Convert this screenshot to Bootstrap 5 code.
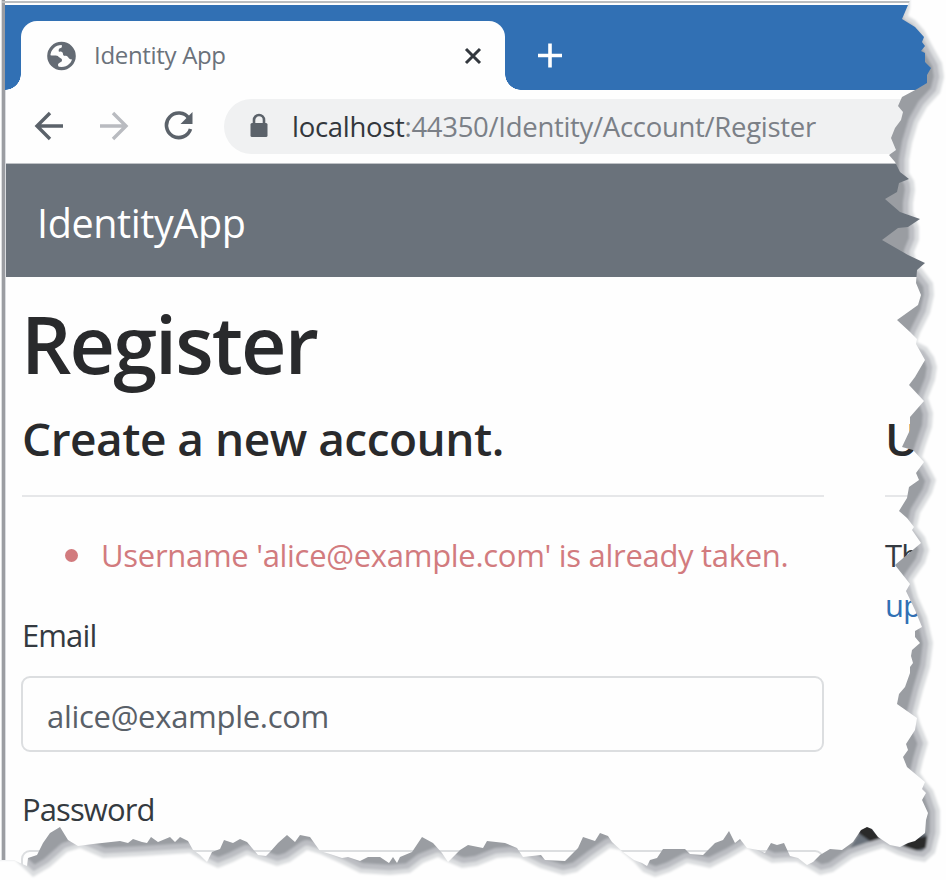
<!DOCTYPE html>
<html lang="en">
<head>
<meta charset="utf-8">
<title>Identity App</title>
<link href="https://cdn.jsdelivr.net/npm/bootstrap@5.3.0/dist/css/bootstrap.min.css" rel="stylesheet">
<style>
body{margin:0;background:#fefefe;font-family:"Open Sans","Noto Sans",sans-serif;color:#343a40}
.screen{width:946px;height:880px;background:#fefefe}
.window{height:860px;border-left:3px solid #9b9da2;margin-left:2px;padding-top:1px;background:#fefefe;box-shadow:-1px 0 #dcdee0}
.top-line{height:2px;background:#babdc0;margin-bottom:2px;margin-left:-3px}
.page-frame{border-left:1px solid #dadce0}
.tabs{height:85px;background:#3170b4;padding-top:16px}
.tab{width:484px;height:69px;margin-left:16px;background:#fefefe;border-radius:16px 16px 0 0;padding:0 23px 0 25px;position:relative;color:#6b727b}
.tab::before,.tab::after{content:"";position:absolute;bottom:0;width:16px;height:16px}
.tab::before{left:-16px;background:radial-gradient(circle at 0 0,#3170b4 15.5px,#fefefe 16px)}
.tab::after{right:-16px;background:radial-gradient(circle at 100% 0,#3170b4 15.5px,#fefefe 16px)}
.tab-title{font-size:24px;letter-spacing:-.32px;margin-left:17px;padding-bottom:2px}
.plus{margin-left:32px}
.toolbar{height:74px;padding-left:28px;border-bottom:1px solid #bfc2c6;padding-bottom:1px}
.forward{margin-left:35px}
.reload{margin-left:34px}
.address{height:55px;margin-left:30px;background:#f0f1f2;border-radius:28px 0 0 28px;padding-left:25px;color:#7b8087;font-size:27.5px;letter-spacing:-.3px}
.url{margin-left:23px;padding-top:2px}
.url b{font-weight:400;color:#33373c}
.site-head{height:113px;background:#6a727b;padding:7px 0 0 31px;color:#fff}
.site-name{font-size:39.5px;letter-spacing:-.4px}
.main{padding-left:16px}
.left{width:802px}
.title{font-size:79px;line-height:90px;font-weight:600;color:#292a2c;letter-spacing:-1.9px;margin:22px 0 19px -1px}
.sub{font-size:46px;line-height:60px;font-weight:600;color:#292a2c;letter-spacing:-.5px;white-space:nowrap;margin:0}
.rule{height:2px;background:#e6e7e9;margin:27px 0 35px}
.t{font-size:31px;line-height:46px;letter-spacing:-.9px;white-space:nowrap}
.err{color:#d27b7e;letter-spacing:-.3px;margin-bottom:34px}
.dot{width:13px;height:13px;border-radius:50%;background:#d27b7e;margin-left:43px;margin-right:23px}
.field{height:76px;border:2px solid #dcdee0;border-radius:9px;padding:4px 24px 0;margin:18px 0 34px -1px;background:#fefefe;letter-spacing:-.3px;color:#596068}
.side{margin-left:61px;padding-top:131px}
.provider{color:#3170b4;margin-top:4px}
</style>
<script src="https://cdn.jsdelivr.net/npm/bootstrap@5.3.0/dist/js/bootstrap.bundle.min.js"></script>
</head>
<body>
<div class="screen position-relative overflow-hidden">
 <div class="window">
  <div class="top-line"></div>
  <div class="tabs d-flex">
   <div class="tab d-flex align-items-center">
    <svg width="31" height="30" viewBox="0 0 31 30"><circle cx="15.500" cy="15" r="12.700" fill="#fefefe" stroke="#646b74" stroke-width="3.200"/><path d="M16 2c-1 2 1 4-1 5-2 0-3 2-2 4 2-1 4 0 4 2 0 3 4 1 5 3 1 2 3 3 5 2 2-8-3-15-11-16zM3 14c4 1 6 0 9 1 1 2 4 2 4 4 0 3-4 2-4 5l1 4C6 27 2 21 3 14z" fill="#646b74"/></svg>
    <span class="tab-title">Identity App</span>
    <svg class="ms-auto" width="18" height="18" viewBox="0 0 18 18"><path d="M2 2l14 14M16 2L2 16" stroke="#33383e" stroke-width="3"/></svg>
   </div>
   <svg class="plus" width="26" height="69" viewBox="0 0 26 69"><path d="M1 34.500h24M13 22.500v24" stroke="#fff" stroke-width="3.600"/></svg>
  </div>
  <div class="page-frame">
   <div class="toolbar d-flex align-items-center">
    <svg width="30" height="30" viewBox="0 0 30 30"><path d="M29 15H4M16 2L3 15l13 13" fill="none" stroke="#5b626a" stroke-width="3.400"/></svg>
    <svg class="forward" width="30" height="30" viewBox="0 0 30 30"><path d="M1 15h25M14 2l13 13-13 13" fill="none" stroke="#b9bbc0" stroke-width="3.400"/></svg>
    <svg class="reload" width="31" height="30" viewBox="0 0 31 30"><path d="M26 7.500A12.300 12.300 0 1 0 27.500 18" fill="none" stroke="#5b626a" stroke-width="3.600"/><path d="M29.500 1v12H17.500z" fill="#5b626a"/></svg>
    <div class="address flex-fill d-flex align-items-center">
     <svg width="20" height="26" viewBox="0 0 20 26"><path d="M5 11V7a5 5 0 0 1 10 0v4" fill="none" stroke="#5b626a" stroke-width="2.600"/><rect x="1.500" y="10" width="17" height="14" rx="1.500" fill="#5b626a"/></svg>
     <span class="url"><b>localhost</b>:44350/Identity/Account/Register</span>
    </div>
   </div>
   <div class="site-head d-flex align-items-center"><span class="site-name">IdentityApp</span></div>
   <div class="main d-flex">
    <div class="left flex-shrink-0">
     <h1 class="title">Register</h1>
     <h2 class="sub">Create a new account.</h2>
     <div class="rule"></div>
     <div class="t err d-flex align-items-center"><span class="dot"></span><span>Username 'alice@example.com' is already taken.</span></div>
     <div class="t">Email</div>
     <div class="t field d-flex align-items-center">alice@example.com</div>
     <div class="t">Password</div>
     <div class="field"></div>
    </div>
    <div class="side flex-fill">
     <div class="sub">Us</div>
     <div class="rule"></div>
     <div class="t">Th</div>
     <div class="t provider">up</div>
    </div>
   </div>
  </div>
 </div>
 <!-- torn paper edge with its stepped shadow -->
 <svg class="position-absolute top-0 start-0" width="946" height="880" viewBox="0 0 946 880">
  <defs>
   <filter id="soft" x="-5%" y="-5%" width="110%" height="110%"><feGaussianBlur stdDeviation="1.300"/></filter>
   <clipPath id="outside"><path d="M910 0L908 5 902 19 915 27 924 37 922 42 925 46 921 51 925 53 925 62 931 68 927 75 927 83 917 89 902 97 898 106 903 112 901 120 895 128 891 138 896 150 889 155 895 162 900 172 909 179 899 183 897 192 885 199 900 212 920 219 908 227 898 228 882 240 908 255 925 263 917 270 916 283 921 295 918 305 897 320 910 332 917 339 916 344 925 360 915 377 909 385 924 401 910 417 910 430 902 447 913 450 924 462 916 473 919 480 909 487 907 498 899 511 907 518 914 527 912 530 921 543 895 565 910 584 906 591 915 610 922 627 915 631 915 637 920 643 912 650 911 656 913 663 910 667 910 673 905 687 899 694 897 704 917 718 915 730 906 744 908 750 903 757 907 767 925 782 922 789 926 793 922 800 928 813 926 820 925 833 915 841 908 843 900 847 890 845 878 837 872 829 867 827 861 830 853 842 842 850 830 849 820 855 813 862 807 865 798 858 790 856 784 843 777 845 771 843 765 853 758 850 747 848 740 839 735 843 729 831 723 840 715 843 703 855 690 854 685 849 663 849 657 858 650 860 647 866 642 863 634 860 623 852 612 842 608 836 600 833 595 841 583 837 578 848 565 861 545 860 541 855 523 857 517 848 505 843 487 841 483 848 468 845 460 850 448 862 442 853 433 843 422 837 412 852 400 857 397 863 393 857 389 863 380 857 368 857 360 861 348 857 342 858 330 854 320 851 310 837 300 835 295 842 287 835 278 843 270 852 266 856 258 855 247 842 240 839 233 843 224 840 220 849 212 852 207 862 200 855 193 850 188 841 180 837 175 842 170 837 158 842 151 837 147 843 142 842 133 839 128 843 120 841 93 844 78 846 68 840 60 827 50 833 43 843 37 855 28 858 27 866 20 863 14 860 0 860V880H946V0z"/></clipPath>
   <path id="outer" stroke-linejoin="round" d="M910 -20L910 8 908 16 915 20 924 30 933 47 942 63 944 77 940 93 927 107 918 123 912 143 909 160 909 173 914 181 915 190 913 203 913 212 919 227 919 240 914 252 916 262 923 270 933 283 934 295 930 313 920 333 917 342 927 347 934 357 937 367 935 380 928 398 933 413 932 427 925 447 922 457 927 463 936 480 932 493 920 513 917 527 925 537 929 550 925 563 913 580 918 597 927 617 933 643 930 667 923 690 917 713 920 723 928 743 923 760 920 773 926 782 933 790 940 810 940 833 935 853 925 862 913 860 898 855 883 848 870 852 853 858 833 872 820 875 808 868 797 862 787 862 772 863 760 857 747 848 730 858 710 868 687 863 670 872 655 877 643 872 634 862 620 850 610 848 593 860 577 872 563 875 540 868 520 858 510 857 497 858 477 866 462 868 448 862 438 857 423 863 410 873 390 875 360 873 340 863 320 854 307 850 290 862 277 866 260 860 247 855 233 862 218 868 207 863 190 853 143 856 103 858 80 848 67 852 50 867 33 877 15 860 -20 860V900H970V-20z"/>
  </defs>
  <g clip-path="url(#outside)">
   <g filter="url(#soft)">
    <rect x="-20" y="-20" width="990" height="920" fill="#9a9da2"/>
    <path d="M848 852L858 835 867 822 885 839 900 845 926 832 926 853 905 855 880 845 862 849z" fill="#6a727b"/>
    <path d="M857 832L867 822 884 842 871 842zM900 848L913 838 927 836 926 848 914 851z" fill="#292a2c"/>
    <use href="#outer" fill="none" stroke="#bcbec3" stroke-width="20"/>
    <use href="#outer" fill="none" stroke="#dcdee0" stroke-width="9"/>
    <use href="#outer" fill="#fefefe"/>
   </g>
  </g>
 </svg>
</div>
</body>
</html>
